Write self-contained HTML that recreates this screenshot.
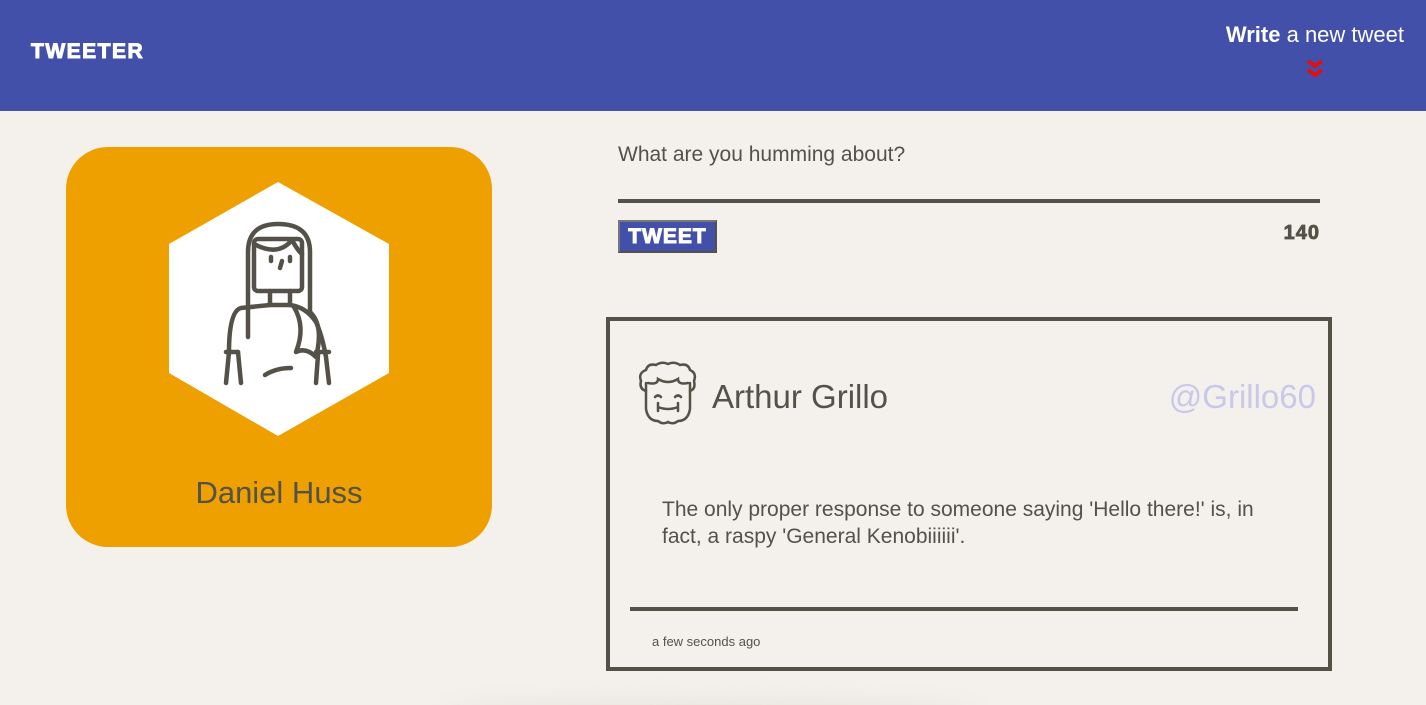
<!DOCTYPE html>
<html><head><meta charset="utf-8"><style>
*{margin:0;padding:0;box-sizing:border-box}
html,body{width:1426px;height:705px;overflow:hidden}
body{background:#f4f1ec;font-family:"Liberation Sans",sans-serif;color:#545149;position:relative}
.hdr{position:absolute;left:0;top:0;width:1426px;height:111px;background:#4350a9}
.logo{position:absolute;left:31px;top:40px;color:#fff;font-weight:900;font-size:21px;letter-spacing:1.5px;-webkit-text-stroke:1px #fff}
.write{position:absolute;right:22px;top:22px;color:#fff;font-size:22px}
.chev{position:absolute;left:1305px;top:58px}
.card{position:absolute;left:66px;top:147px;width:426px;height:400px;border-radius:42px;background:#eea000;overflow:hidden}
.name{position:absolute;left:0;width:426px;top:328px;text-align:center;font-size:31px;color:#545149}
.ta{position:absolute;left:618px;top:143px;font-size:21px;color:#545149}
.line{position:absolute;left:618px;top:199px;width:702px;height:4px;background:#545149}
.btn{position:absolute;left:618px;top:220px;width:99px;height:33px;background:#4350a9;border:2px solid #545149;border-top-color:#777;border-left-color:#777;color:#fff;font-weight:900;font-size:21px;text-align:center;line-height:29px;letter-spacing:1px;-webkit-text-stroke:1px #fff}
.cnt{position:absolute;right:106px;top:222px;font-weight:900;font-size:20px;color:#545149;-webkit-text-stroke:.8px #545149;letter-spacing:1px}
.tw{position:absolute;left:606px;top:317px;width:726px;height:354px;border:4px solid #545149}
.an{position:absolute;left:102px;top:57px;font-size:33px;color:#545149}
.hd{position:absolute;right:12px;top:57px;font-size:33px;color:#c9c8e9}
.txt{position:absolute;left:52px;top:175px;width:615px;font-size:21px;line-height:27px;color:#545149}
.tl{position:absolute;left:20px;top:286px;width:668px;height:4px;background:#545149}
.ago{position:absolute;left:42px;top:313px;font-size:13px;color:#545149}
.shadow{position:absolute;left:440px;top:700px;width:540px;height:30px;border-radius:50%;background:#e8e4dd;filter:blur(12px)}
</style></head><body>
<div class="hdr">
<div class="logo">TWEETER</div>
<div class="write"><b>Write</b> a new tweet</div>
<svg class="chev" width="20" height="24" viewBox="0 0 20 24"><path d="M3 3l7 5 7-5M3 12l7 5 7-5" stroke="#e01010" stroke-width="4" fill="none"/></svg>
</div>
<div class="card">
<svg width="426" height="400" style="position:absolute;left:0;top:0">
<polygon points="212,35 323,97 323,226 212,289 103,226 103,97" fill="#fff"/>
<g fill="none" stroke="#545149" stroke-width="4.5" stroke-linecap="round" stroke-linejoin="round">
<path d="M182,190 V105 Q182,77 212,77 Q244,77 244,105 V165"/>
<rect x="188" y="92" width="48" height="52" rx="4"/>
<path d="M188,97 Q212,110 226,93 Q232,104 236,107"/>
<path d="M204,144 V158 H224 V144"/>
<path d="M224,158 Q240,160 250,175 Q256,188 260,210 L263,236 M160,236 L163,205 Q163,164 175,161 L204,158"/>
<path d="M244,165 Q258,178 250,210 Q240,200 230,205 Q240,180 228,160"/>
<path d="M160,205 H172 M250,205 H263"/>
<path d="M172,205 L175,236 M252,208 L250,236"/>
<path d="M199,228 Q210,221 225,221"/>
<path d="M205,110 V114 M224,110 V114 M216,114 L214,121"/>
</g>
</svg>
<div class="name">Daniel Huss</div>
</div>
<div class="ta">What are you humming about?</div>
<div class="line"></div>
<div class="btn">TWEET</div>
<div class="cnt">140</div>
<div class="tw">
<svg style="position:absolute;left:26px;top:40px" width="64" height="68" viewBox="0 0 64 68">
<g fill="none" stroke="#545149" stroke-width="2.5" stroke-linecap="round">
<path d="M10,30 Q3,28 5,20 Q2,12 10,9 Q12,2 20,4 Q26,0 32,3 Q38,0 44,4 Q52,2 54,9 Q61,12 58,20 Q60,28 54,30"/>
<path d="M10,22 Q10,34 10,48 Q12,60 22,60 Q27,64 32,61 Q37,64 42,60 Q52,60 54,48 V22"/>
<path d="M12,22 Q22,24 22,18 Q32,24 42,18 Q42,24 52,22"/>
<path d="M19,36 Q22,33 25,36 M39,36 Q42,33 45,36"/>
<path d="M22,46 Q32,50 42,46 M22,42 V50 M42,42 V50"/>
</g></svg>
<div class="an">Arthur Grillo</div>
<div class="hd">@Grillo60</div>
<div class="txt">The only proper response to someone saying 'Hello there!' is, in fact, a raspy 'General Kenobiiiiii'.</div>
<div class="tl"></div>
<div class="ago">a few seconds ago</div>
</div>
<div class="shadow"></div>
</body></html>
